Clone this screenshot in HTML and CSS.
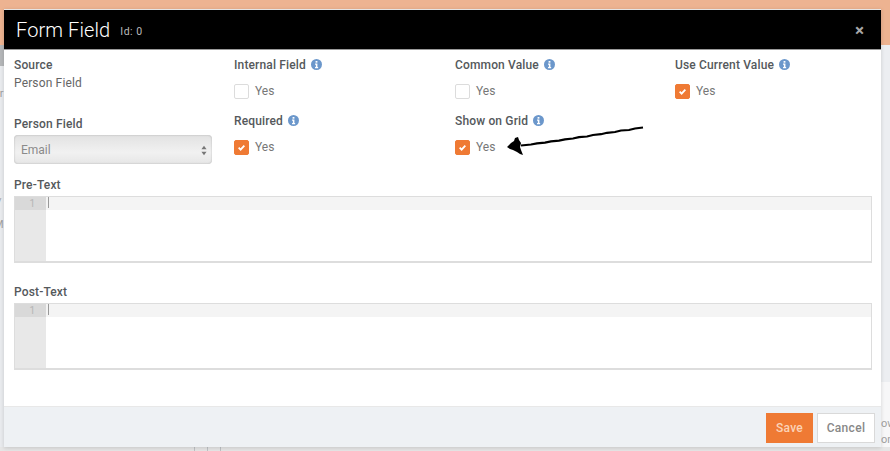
FILE: index.html
```html
<!DOCTYPE html>
<html lang="en">
<head>
    <meta charset="UTF-8">
    <meta name="viewport" content="width=device-width, initial-scale=1.0">
    <title>Form Field</title>
    <link rel="stylesheet" href="styles.css">
</head>
<body>
    <div class="backdrop-top"></div>
    <div class="backdrop-left">
        <div class="backdrop-block"></div>
        <span class="backdrop-text backdrop-text-a">er</span>
        <span class="backdrop-text backdrop-text-b">/</span>
        <span class="backdrop-text backdrop-text-c">M</span>
    </div>
    <div class="backdrop-right">
        <div class="backdrop-panel"></div>
        <span class="backdrop-text backdrop-text-d">ow</span>
        <span class="backdrop-text backdrop-text-e">on</span>
    </div>
    <div class="backdrop-bottom">
        <span class="backdrop-tick"></span>
        <span class="backdrop-tick"></span>
        <span class="backdrop-tick"></span>
    </div>

    <div class="modal">
        <div class="modal-header">
            <span class="modal-title">Form Field</span>
            <span class="modal-id">Id: 0</span>
            <span class="modal-close">&times;</span>
        </div>
        <div class="modal-body">
            <div class="field-grid">
                <div class="field">
                    <div class="field-label">Source</div>
                    <div class="field-value">Person Field</div>
                </div>
                <div class="field">
                    <div class="field-label">Internal Field <svg class="info" viewBox="0 0 12 12"><circle cx="6" cy="6" r="6"/><rect x="5" y="2.2" width="2" height="1.8"/><path d="M4.4 5h2.6v3.8h.8V10H4.4V8.800h.9V6.200h-.9z"/></svg></div>
                    <label class="check-row"><span class="check"></span>Yes</label>
                </div>
                <div class="field">
                    <div class="field-label">Common Value <svg class="info" viewBox="0 0 12 12"><circle cx="6" cy="6" r="6"/><rect x="5" y="2.2" width="2" height="1.8"/><path d="M4.4 5h2.6v3.8h.8V10H4.4V8.800h.9V6.200h-.9z"/></svg></div>
                    <label class="check-row"><span class="check"></span>Yes</label>
                </div>
                <div class="field">
                    <div class="field-label">Use Current Value <svg class="info" viewBox="0 0 12 12"><circle cx="6" cy="6" r="6"/><rect x="5" y="2.2" width="2" height="1.8"/><path d="M4.4 5h2.6v3.8h.8V10H4.4V8.800h.9V6.200h-.9z"/></svg></div>
                    <label class="check-row"><span class="check checked"><svg viewBox="0 0 16 16"><path d="M4.500 8.200l2.400 2.400 4.600-5"/></svg></span>Yes</label>
                </div>
                <div class="field field-person">
                    <div class="field-label">Person Field</div>
                    <div class="select-box">
                        <span>Email</span>
                        <svg class="select-arrows" viewBox="0 0 7 12"><path d="M3.500 0.500L6.500 4.500H0.500z"/><path d="M3.500 11.500L0.500 7.500H6.500z"/></svg>
                    </div>
                </div>
                <div class="field">
                    <div class="field-label">Required <svg class="info" viewBox="0 0 12 12"><circle cx="6" cy="6" r="6"/><rect x="5" y="2.2" width="2" height="1.8"/><path d="M4.4 5h2.6v3.8h.8V10H4.4V8.800h.9V6.200h-.9z"/></svg></div>
                    <label class="check-row"><span class="check checked"><svg viewBox="0 0 16 16"><path d="M4.500 8.200l2.400 2.400 4.600-5"/></svg></span>Yes</label>
                </div>
                <div class="field">
                    <div class="field-label">Show on Grid <svg class="info" viewBox="0 0 12 12"><circle cx="6" cy="6" r="6"/><rect x="5" y="2.2" width="2" height="1.8"/><path d="M4.4 5h2.6v3.8h.8V10H4.4V8.800h.9V6.200h-.9z"/></svg></div>
                    <label class="check-row"><span class="check checked"><svg viewBox="0 0 16 16"><path d="M4.500 8.200l2.400 2.400 4.600-5"/></svg></span>Yes</label>
                </div>
            </div>

            <div class="field-label editor-label">Pre-Text</div>
            <div class="editor">
                <div class="editor-gutter"><div class="editor-line-no">1</div></div>
                <div class="editor-main"><div class="editor-active"><span class="editor-cursor"></span></div></div>
            </div>

            <div class="field-label editor-label editor-label-post">Post-Text</div>
            <div class="editor">
                <div class="editor-gutter"><div class="editor-line-no">1</div></div>
                <div class="editor-main"><div class="editor-active"><span class="editor-cursor"></span></div></div>
            </div>
        </div>
        <div class="modal-footer">
            <button class="btn btn-save">Save</button>
            <button class="btn btn-cancel">Cancel</button>
        </div>

        <!-- hand drawn arrow on top of the screenshot -->
        <svg class="scribble" viewBox="0 0 150 40">
            <path class="scribble-line" d="M142 4.500L134 5.500L128 7L120 7.500L114 9L106 9.800L100 11.200L92 12L86 13.500L78 14.200L72 15.500L64 16.300L58 17.600L50 18.300L44 19.600L36 20.300L30 21.500L20 22.500"/>
            <path class="scribble-head" d="M6 24L10 20L13 18L14 15L17 14L18 17L20 20L19 24L20 27L22 32L19 31L16 29L12 27L9 26z"/>
        </svg>
    </div>
</body>
</html>
```

FILE: styles.css
```css
html, body {
    margin: 0;
    padding: 0;
}
body {
    position: relative;
    height: 451px;
    width: 890px;
    overflow: hidden;
    box-sizing: border-box;
    padding: 9px 9px 4px 4px;
    font-family: "Roboto", "Liberation Sans", sans-serif;
    background-color: #eef0f2;
}
.backdrop-top {
    position: absolute;
    left: 0;
    top: 0;
    width: 100%;
    height: 45px;
    background: #edb391;
}
.backdrop-left {
    position: absolute;
    left: 0;
    top: 45px;
    width: 4px;
    bottom: 0;
    background: #e9ebee;
}
.backdrop-block {
    height: 21px;
    background: #b4b6b8;
}
.backdrop-right {
    position: absolute;
    right: 0;
    top: 45px;
    width: 9px;
    bottom: 0;
    background: #f7f7f8;
}
.backdrop-panel {
    height: 337px;
    background: #eceef1;
}
.backdrop-bottom {
    position: absolute;
    left: 0;
    bottom: 0;
    width: 100%;
    height: 4px;
    background: #e6e6e6;
}
.backdrop-tick {
    position: absolute;
    top: 0;
    width: 1px;
    height: 4px;
    background: #bfc2c5;
}
.backdrop-tick:nth-child(1) { left: 194px; }
.backdrop-tick:nth-child(2) { left: 207px; }
.backdrop-tick:nth-child(3) { left: 220px; }
.backdrop-text {
    position: absolute;
    font-size: 11px;
    color: #a0a0a0;
}
.backdrop-text-a { left: -6px; top: 42px; }
.backdrop-text-b { left: -3px; top: 151px; }
.backdrop-text-c { left: -6px; top: 173px; }
.backdrop-text-d { left: 0; top: 372px; }
.backdrop-text-e { left: 0; top: 388px; }

.modal {
    position: relative;
    display: flex;
    flex-direction: column;
    height: 438px;
    background: white;
    box-shadow: 0 1px 4px rgba(0, 0, 0, 0.15);
}
.modal-header {
    display: flex;
    align-items: center;
    height: 39px;
    padding: 0 17px 0 12px;
    background: black;
    border-top: 1px solid #e4e4e4;
    border-bottom: 1px solid #9a9a9a;
    color: white;
}
.modal-title {
    font-size: 20px;
    font-weight: 300;
    letter-spacing: 0.1px;
}
.modal-id {
    margin-left: 10px;
    margin-top: 3px;
    font-size: 10.5px;
    letter-spacing: 0.5px;
    color: #bbb;
}
.modal-close {
    margin-left: auto;
    font-size: 17px;
    font-weight: 700;
    color: #a8a8a8;
}
.modal-body {
    flex: 1;
    padding: 8px 9px 0 10px;
}
.field-grid {
    display: grid;
    grid-template-columns: 220px 221px 220px 1fr;
    grid-template-rows: 56px 53px;
}
.field-person {
    padding-top: 3px;
}
.field-label {
    font-size: 12px;
    font-weight: 500;
    line-height: 14px;
    letter-spacing: 0.15px;
    color: #55595c;
}
.field-value {
    margin-top: 4px;
    font-size: 12px;
    line-height: 14px;
    letter-spacing: 0.15px;
    color: #666;
}
.info {
    width: 11px;
    height: 11px;
    margin-left: 2px;
    vertical-align: -1px;
    fill: #6b97cb;
}
.info rect, .info path {
    fill: white;
}
.check-row {
    display: flex;
    align-items: center;
    gap: 6px;
    margin-top: 11px;
    font-size: 12px;
    line-height: 16px;
    color: #777;
}
.check {
    display: flex;
    box-sizing: border-box;
    width: 15px;
    height: 15px;
    border: 1px solid #dcdcdc;
    border-radius: 2px;
    background: white;
}
.check.checked {
    border-color: #ef7a34;
    background: #ef7a34;
}
.check svg {
    width: 13px;
    height: 13px;
    fill: none;
    stroke: white;
    stroke-width: 2.2;
}
.select-box {
    display: flex;
    align-items: center;
    justify-content: space-between;
    box-sizing: border-box;
    width: 198px;
    height: 29px;
    margin-top: 4px;
    padding: 1px 5px 0 7px;
    font-size: 12px;
    color: #8a8a8a;
    border-radius: 4px;
    background: linear-gradient(#e2e2e2, #f1f1f1 60%, #e6e6e6);
    box-shadow: inset 0 0 2px rgba(0, 0, 0, 0.25);
}
.select-arrows {
    width: 6px;
    height: 11px;
    fill: #777;
}
.editor-label {
    margin-top: 11px;
}
.editor-label-post {
    margin-top: 22px;
}
.editor {
    display: flex;
    box-sizing: border-box;
    width: 858px;
    height: 67px;
    margin-top: 4px;
    border: 1px solid #ddd;
    border-bottom-width: 2px;
    background: white;
}
.editor-gutter {
    width: 31px;
    background: #e8e8e8;
}
.editor-line-no {
    height: 13px;
    line-height: 13px;
    padding-right: 11px;
    text-align: right;
    font-size: 10px;
    color: #b5b5b5;
    background: #d9d9d9;
}
.editor-main {
    flex: 1;
}
.editor-active {
    height: 13px;
    padding-left: 2px;
    background: #f4f4f4;
}
.editor-cursor {
    display: block;
    width: 1px;
    height: 11px;
    background: #999;
}
.modal-footer {
    display: flex;
    justify-content: flex-end;
    gap: 4px;
    height: 41px;
    box-sizing: border-box;
    padding: 6px 6px 0 0;
    background: #eef1f4;
    border-top: 1px solid #e8e8e8;
}
.btn {
    height: 30px;
    padding: 0;
    font-family: inherit;
    font-size: 12px;
    font-weight: 500;
    letter-spacing: 0.3px;
}
.btn-save {
    width: 47px;
    border: none;
    background: #ef7a34;
    color: #fbd3b8;
}
.btn-cancel {
    width: 58px;
    border: 1px solid #d9d9d9;
    background: white;
    color: #888;
}
.scribble {
    position: absolute;
    left: 497px;
    top: 114px;
    width: 150px;
    height: 40px;
}
.scribble-line {
    fill: none;
    stroke: black;
    stroke-width: 2.2;
}
.scribble-head {
    fill: black;
}
```
